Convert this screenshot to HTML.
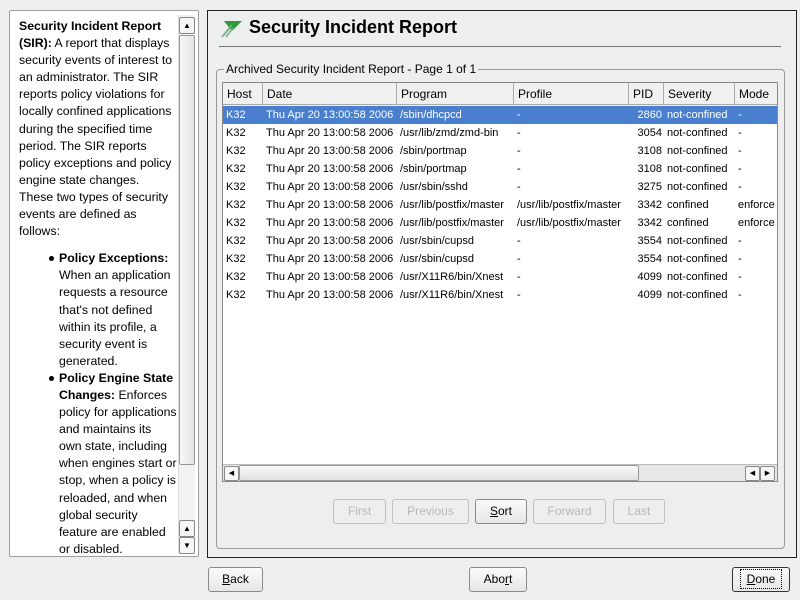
<!DOCTYPE html>
<html><head><style>
*{margin:0;padding:0;box-sizing:border-box}
body{width:800px;height:600px;background:#eeeeee;font-family:"Liberation Sans",sans-serif;font-size:12px;color:#000;position:relative;overflow:hidden}
.a{position:absolute}
.lp{left:9px;top:10px;width:190px;height:547px;background:#fff;border:1px solid #a0a0a0;border-radius:2px;overflow:hidden}
.lt{position:absolute;left:9px;top:7px;font-size:12.3px;line-height:17.1px;white-space:nowrap}
.lt div{height:17.1px}
.ind{padding-left:40px;position:relative}
.bul{position:absolute;left:30px;top:6px;width:5px;height:5px;border-radius:50%;background:#000}
.sb{position:absolute;left:168px;top:4px;width:17px;height:538px;background:#f2f2f2;border-left:1px solid #ddd}
.btn{position:absolute;border:1px solid #8a8a8a;border-radius:3px;background:linear-gradient(#fafafa,#e6e6e6);text-align:center;font-size:12px;line-height:23px}
.dis{color:#b8b8b8;border-color:#c0c0c0;background:#eee}
.rp{left:207px;top:10px;width:590px;height:548px;border:1px solid #222;background:#eeeeee}
table{border-collapse:collapse;font-size:11px}
td{height:18px;padding:0 0 0 3px;white-space:nowrap;overflow:hidden}
.arr{position:absolute;width:15px;height:15px;border:1px solid #888;border-radius:2px;background:#f6f6f6}
</style></head><body>
<div class="a lp">
 <div class="lt">
  <div><b>Security Incident Report</b></div>
  <div><b>(SIR):</b> A report that displays</div>
  <div>security events of interest to</div>
  <div>an administrator. The SIR</div>
  <div>reports policy violations for</div>
  <div>locally confined applications</div>
  <div>during the specified time</div>
  <div>period. The SIR reports</div>
  <div>policy exceptions and policy</div>
  <div>engine state changes.</div>
  <div>These two types of security</div>
  <div>events are defined as</div>
  <div>follows:</div>
  <div style="height:10px"></div>
  <div class="ind"><span class="bul"></span><b>Policy Exceptions:</b></div>
  <div class="ind">When an application</div>
  <div class="ind">requests a resource</div>
  <div class="ind">that's not defined</div>
  <div class="ind">within its profile, a</div>
  <div class="ind">security event is</div>
  <div class="ind">generated.</div>
  <div class="ind"><span class="bul"></span><b>Policy Engine State</b></div>
  <div class="ind"><b>Changes:</b> Enforces</div>
  <div class="ind">policy for applications</div>
  <div class="ind">and maintains its</div>
  <div class="ind">own state, including</div>
  <div class="ind">when engines start or</div>
  <div class="ind">stop, when a policy is</div>
  <div class="ind">reloaded, and when</div>
  <div class="ind">global security</div>
  <div class="ind">feature are enabled</div>
  <div class="ind">or disabled.</div>
 </div>
 <div class="sb">
  <div class="arr" style="left:0;top:2px;width:16px;height:17px;font-size:8px;text-align:center;line-height:15px">▲</div>
  <div style="position:absolute;left:0;top:20px;width:16px;height:430px;border:1px solid #999;border-radius:2px;background:linear-gradient(90deg,#f8f8f8,#e4e4e4)"></div>
  <div class="arr" style="left:0;top:505px;width:16px;height:17px;font-size:8px;text-align:center;line-height:15px">▲</div>
  <div class="arr" style="left:0;top:522px;width:16px;height:17px;font-size:8px;text-align:center;line-height:15px">▼</div>
 </div>
</div>

<div class="a rp">
 <svg class="a" style="left:12px;top:6px" width="24" height="22" viewBox="0 0 24 22"><path d="M4 4 L22 4 L12 14 Z" fill="#2a9a3a"/><path d="M2 20 L10 10 M4 18 L12 8 M6 20 L13 11" stroke="#7a8" stroke-width="1.5"/></svg>
 <div class="a" style="left:41px;top:6px;font-size:18px;font-weight:bold">Security Incident Report</div>
 <div class="a" style="left:11px;top:35px;width:562px;height:1px;background:#777"></div>
 <div class="a" style="left:8px;top:58px;width:569px;height:480px;border:1px solid #999;border-radius:4px"></div>
 <div class="a" style="left:16px;top:51px;background:#eee;padding:0 2px;font-size:12px">Archived Security Incident Report - Page 1 of 1</div>
 <div class="a" style="left:14px;top:71px;width:556px;height:400px;border:1px solid #888;background:#fff;overflow:hidden">
  <div style="position:absolute;left:0;top:0;width:554px;height:23px;background:#f0f0f0;font-size:12px">
   <div class="a" style="left:0;width:40px;height:22px;border-right:1px solid #aaa;border-bottom:1px solid #aaa;padding:4px">Host</div>
   <div class="a" style="left:40px;width:134px;height:22px;border-right:1px solid #aaa;border-bottom:1px solid #aaa;padding:4px">Date</div>
   <div class="a" style="left:174px;width:117px;height:22px;border-right:1px solid #aaa;border-bottom:1px solid #aaa;padding:4px">Program</div>
   <div class="a" style="left:291px;width:115px;height:22px;border-right:1px solid #aaa;border-bottom:1px solid #aaa;padding:4px">Profile</div>
   <div class="a" style="left:406px;width:35px;height:22px;border-right:1px solid #aaa;border-bottom:1px solid #aaa;padding:4px">PID</div>
   <div class="a" style="left:441px;width:71px;height:22px;border-right:1px solid #aaa;border-bottom:1px solid #aaa;padding:4px">Severity</div>
   <div class="a" style="left:512px;width:42px;height:22px;border-bottom:1px solid #aaa;padding:4px">Mode</div>
  </div>
  <table class="a" style="left:0;top:23px;table-layout:fixed;width:554px">
   <colgroup><col style="width:40px"><col style="width:134px"><col style="width:117px"><col style="width:115px"><col style="width:35px"><col style="width:71px"><col style="width:42px"></colgroup>
   <tr style="background:#4a7fcf;color:#fff"><td>K32</td><td>Thu Apr 20 13:00:58 2006</td><td>/sbin/dhcpcd</td><td>-</td><td style="text-align:right;padding-right:2px">2860</td><td>not-confined</td><td>-</td></tr>
   <tr><td>K32</td><td>Thu Apr 20 13:00:58 2006</td><td>/usr/lib/zmd/zmd-bin</td><td>-</td><td style="text-align:right;padding-right:2px">3054</td><td>not-confined</td><td>-</td></tr>
   <tr><td>K32</td><td>Thu Apr 20 13:00:58 2006</td><td>/sbin/portmap</td><td>-</td><td style="text-align:right;padding-right:2px">3108</td><td>not-confined</td><td>-</td></tr>
   <tr><td>K32</td><td>Thu Apr 20 13:00:58 2006</td><td>/sbin/portmap</td><td>-</td><td style="text-align:right;padding-right:2px">3108</td><td>not-confined</td><td>-</td></tr>
   <tr><td>K32</td><td>Thu Apr 20 13:00:58 2006</td><td>/usr/sbin/sshd</td><td>-</td><td style="text-align:right;padding-right:2px">3275</td><td>not-confined</td><td>-</td></tr>
   <tr><td>K32</td><td>Thu Apr 20 13:00:58 2006</td><td>/usr/lib/postfix/master</td><td>/usr/lib/postfix/master</td><td style="text-align:right;padding-right:2px">3342</td><td>confined</td><td>enforce</td></tr>
   <tr><td>K32</td><td>Thu Apr 20 13:00:58 2006</td><td>/usr/lib/postfix/master</td><td>/usr/lib/postfix/master</td><td style="text-align:right;padding-right:2px">3342</td><td>confined</td><td>enforce</td></tr>
   <tr><td>K32</td><td>Thu Apr 20 13:00:58 2006</td><td>/usr/sbin/cupsd</td><td>-</td><td style="text-align:right;padding-right:2px">3554</td><td>not-confined</td><td>-</td></tr>
   <tr><td>K32</td><td>Thu Apr 20 13:00:58 2006</td><td>/usr/sbin/cupsd</td><td>-</td><td style="text-align:right;padding-right:2px">3554</td><td>not-confined</td><td>-</td></tr>
   <tr><td>K32</td><td>Thu Apr 20 13:00:58 2006</td><td>/usr/X11R6/bin/Xnest</td><td>-</td><td style="text-align:right;padding-right:2px">4099</td><td>not-confined</td><td>-</td></tr>
   <tr><td>K32</td><td>Thu Apr 20 13:00:58 2006</td><td>/usr/X11R6/bin/Xnest</td><td>-</td><td style="text-align:right;padding-right:2px">4099</td><td>not-confined</td><td>-</td></tr>
  </table>
  <div class="a" style="left:0;top:381px;width:554px;height:17px;background:#e8e8e8;border-top:1px solid #bbb">
   <div class="arr" style="left:1px;top:1px;font-size:7px;text-align:center;line-height:13px">◀</div>
   <div class="a" style="left:16px;top:0px;width:400px;height:16px;border:1px solid #999;border-radius:2px;background:linear-gradient(#fafafa,#e2e2e2)"></div>
   <div class="arr" style="left:522px;top:1px;font-size:7px;text-align:center;line-height:13px">◀</div>
   <div class="arr" style="left:537px;top:1px;font-size:7px;text-align:center;line-height:13px">▶</div>
  </div>
 </div>
 <div class="btn dis" style="left:125px;top:488px;width:53px;height:25px">First</div>
 <div class="btn dis" style="left:184px;top:488px;width:77px;height:25px">Previous</div>
 <div class="btn" style="left:267px;top:488px;width:52px;height:25px"><u>S</u>ort</div>
 <div class="btn dis" style="left:325px;top:488px;width:73px;height:25px">Forward</div>
 <div class="btn dis" style="left:405px;top:488px;width:52px;height:25px">Last</div>
</div>

<div class="btn" style="left:208px;top:567px;width:55px;height:25px"><u>B</u>ack</div>
<div class="btn" style="left:469px;top:567px;width:58px;height:25px">Abo<u>r</u>t</div>
<div class="btn" style="left:732px;top:567px;width:58px;height:25px;border-color:#333"><span style="border:1px dotted #000;padding:2px 6px"><u>D</u>one</span></div>
</body></html>
